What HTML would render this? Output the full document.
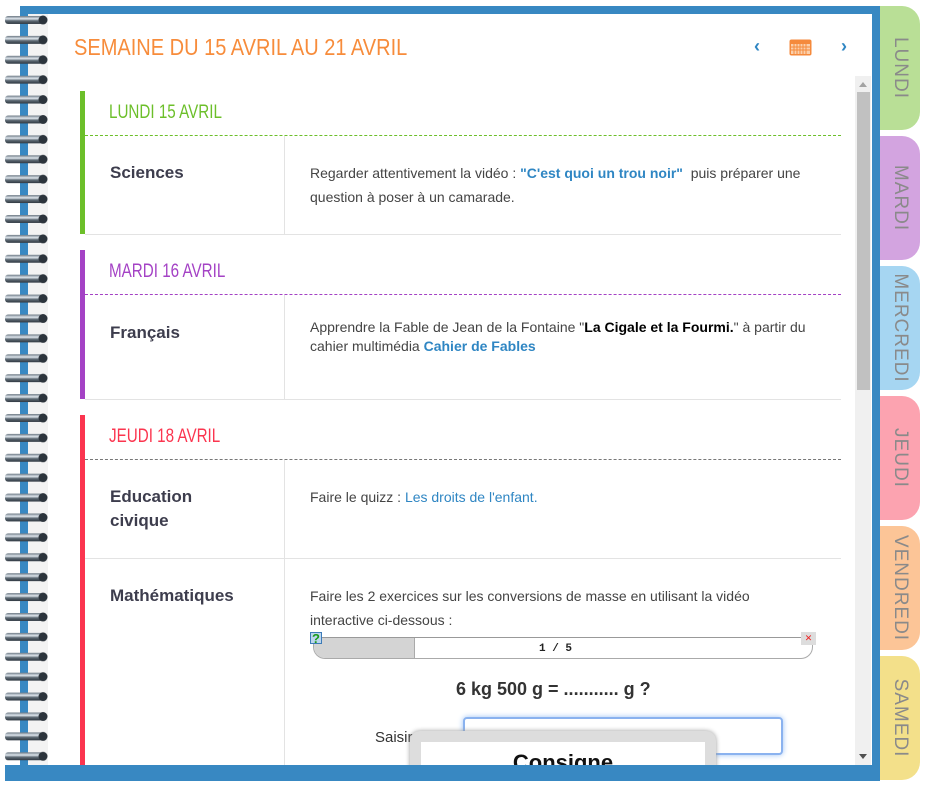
<!DOCTYPE html>
<html><head><meta charset="utf-8"><style>
*{margin:0;padding:0;box-sizing:border-box}
body{width:935px;height:790px;background:#fff;position:relative;overflow:hidden;font-family:"Liberation Sans",Arial,sans-serif}
.abs{position:absolute}
.tab{position:absolute;left:880px;width:40px;height:124px;border-radius:0 18px 18px 0;}
.tab span{position:absolute;left:50%;top:50%;transform:translate(-50%,-50%) rotate(90deg);font-size:19px;color:#8a8a8a;letter-spacing:1px;white-space:nowrap;font-weight:normal}
.hd{position:absolute;font-size:19px;letter-spacing:0;transform:scaleX(.8);transform-origin:left;white-space:nowrap}
.sub{position:absolute;left:110px;font-size:17px;font-weight:bold;color:#3d3d4d;line-height:24px}
.txt{position:absolute;left:310px;font-size:14px;color:#444;line-height:24px}
.lk{color:#2f86c3;font-weight:bold}
</style></head><body>
<div class="tab" style="top:6px;background:#b9df96"><span>LUNDI</span></div>
<div class="tab" style="top:136px;background:#d3a4e0"><span>MARDI</span></div>
<div class="tab" style="top:266px;background:#a6d6f2"><span>MERCREDI</span></div>
<div class="tab" style="top:396px;background:#fca3b0"><span>JEUDI</span></div>
<div class="tab" style="top:526px;background:#fcc597"><span>VENDREDI</span></div>
<div class="tab" style="top:656px;background:#f3e08a"><span>SAMEDI</span></div>
<div class="abs" style="left:20px;top:6px;width:860px;height:775px;background:#3888c2"></div>
<div class="abs" style="left:28px;top:14px;width:844px;height:751px;background:#fff;overflow:hidden">
<div class="abs" style="left:0;top:0;width:20px;height:751px;background:#f3f3f3"></div>
<div class="hd" style="left:46px;top:20px;color:#f78c3b;font-size:23px;transform:scaleX(.87)">SEMAINE DU 15 AVRIL AU 21 AVRIL</div>
<div class="abs" style="left:726px;top:22px;color:#2f86c3;font-size:18px;font-weight:bold">‹</div>
<div class="abs" style="left:813px;top:22px;color:#2f86c3;font-size:18px;font-weight:bold">›</div>
<svg class="abs" style="left:761px;top:25px" width="23" height="17"><rect x="0.5" y="0.5" width="22" height="16" rx="2" fill="#f58a3c"/><rect x="2" y="5" width="19" height="10" fill="#fbd0ac"/><g stroke="#f58a3c" stroke-width="1"><path d="M5 5v10M8 5v10M11 5v10M14 5v10M17 5v10M2 8h19M2 11h19"/></g></svg>
<div class="abs" style="left:827px;top:62px;width:16px;height:689px;background:#f0f0f0"></div>
<div class="abs" style="left:829px;top:78px;width:13px;height:298px;background:#c1c1c1"></div>
<div class="abs" style="left:831px;top:68px;width:0;height:0;border:4px solid transparent;border-bottom:5px solid #a3a3a3;border-top:0"></div>
<div class="abs" style="left:831px;top:740px;width:0;height:0;border:4px solid transparent;border-top:5px solid #505050;border-bottom:0"></div>
<div class="abs" style="left:52px;top:77px;width:5px;height:143px;background:#6cbf2a"></div>
<div class="hd" style="left:81px;top:88px;color:#6cbf2a">LUNDI 15 AVRIL</div>
<div class="abs" style="left:57px;top:121px;width:756px;border-top:1px dashed #6cbf2a"></div>
<div class="abs" style="left:256px;top:122px;width:1px;height:98px;background:#e3e3e3"></div>
<div class="abs" style="left:57px;top:220px;width:756px;height:1px;background:#e3e3e3"></div>
<div class="abs" style="left:52px;top:236px;width:5px;height:149px;background:#a442c5"></div>
<div class="hd" style="left:81px;top:247px;color:#a442c5">MARDI 16 AVRIL</div>
<div class="abs" style="left:57px;top:280px;width:756px;border-top:1px dashed #a442c5"></div>
<div class="abs" style="left:256px;top:281px;width:1px;height:104px;background:#e3e3e3"></div>
<div class="abs" style="left:57px;top:385px;width:756px;height:1px;background:#e3e3e3"></div>
<div class="abs" style="left:52px;top:401px;width:5px;height:360px;background:#fb354f"></div>
<div class="hd" style="left:81px;top:412px;color:#fb354f">JEUDI 18 AVRIL</div>
<div class="abs" style="left:57px;top:445px;width:756px;border-top:1px dashed #777"></div>
<div class="abs" style="left:256px;top:446px;width:1px;height:320px;background:#e3e3e3"></div>
<div class="abs" style="left:57px;top:544px;width:756px;height:1px;background:#e3e3e3"></div>
</div>
<div class="sub" style="top:161px">Sciences</div>
<div class="txt" style="top:161px;width:520px">Regarder attentivement la vidéo : <span class="lk">"C'est quoi un trou noir"</span>&nbsp; puis préparer une question à poser à un camarade.</div>
<div class="sub" style="top:321px">Français</div>
<div class="txt" style="top:318px;width:520px;line-height:19px">Apprendre la Fable de Jean de la Fontaine "<b style="color:#000">La Cigale et la Fourmi.</b>" à partir du cahier multimédia <span class="lk">Cahier de Fables</span></div>
<div class="sub" style="top:485px">Education<br>civique</div>
<div class="txt" style="top:485px">Faire le quizz : <span style="color:#2f86c3">Les droits de l'enfant.</span></div>
<div class="sub" style="top:584px">Mathématiques</div>
<div class="txt" style="top:584px;width:480px">Faire les 2 exercices sur les conversions de masse en utilisant la vidéo interactive ci-dessous :</div>
<div class="abs" style="left:313px;top:637px;width:500px;height:22px;border:1px solid #aaa;border-top:1px solid #999;border-radius:0 0 12px 12px;background:#fff;overflow:hidden"><div style="width:101px;height:100%;background:#d4d4d4;border-right:1px solid #aaa"></div><div class="abs" style="left:225px;top:5px;font-family:'Liberation Mono',monospace;font-size:11px;font-weight:bold;color:#222">1 / 5</div></div>
<div class="abs" style="left:310px;top:632px;width:12px;height:12px;background:#bcd6ee;border:1px solid #3d7bb8;color:#1a9a1a;font-size:13px;font-weight:bold;line-height:12px;text-align:center">?</div>
<div class="abs" style="left:801px;top:632px;width:15px;height:13px;background:#ddd;color:#e22;font-size:9px;text-align:center;line-height:13px">✕</div>
<div class="abs" style="left:456px;top:679px;font-size:18px;font-weight:bold;color:#333">6 kg 500 g = ........... g ?</div>
<div class="abs" style="left:375px;top:729px;font-size:15px;color:#333">Saisir</div>
<div class="abs" style="left:463px;top:717px;width:320px;height:38px;border:2px solid #8ab2ef;border-radius:4px;background:#fff;box-shadow:0 0 6px #9ac0f5"></div>
<div class="abs" style="left:410px;top:731px;width:306px;height:40px;background:#ddd;border-radius:10px 10px 0 0;box-shadow:0 0 5px #999"></div>
<div class="abs" style="left:421px;top:742px;width:284px;height:30px;background:#fff;text-align:center;font-size:22px;font-weight:bold;color:#111;padding-top:8px">Consigne</div>
<div class="abs" style="left:5px;top:765px;width:867px;height:16px;background:#3888c2"></div>
<svg class="abs" style="left:0;top:0" width="52" height="765">
<defs><linearGradient id="g" x1="0" y1="0" x2="0" y2="1"><stop offset="0" stop-color="#6b7782"/><stop offset=".35" stop-color="#dfe7ee"/><stop offset=".6" stop-color="#5f6b75"/><stop offset="1" stop-color="#2e3740"/></linearGradient>
<pattern id="p" x="0" y="14" width="52" height="19.9" patternUnits="userSpaceOnUse"><rect x="5" y="2" width="40" height="8" rx="3" fill="url(#g)"/><circle cx="43" cy="6" r="4.5" fill="#2c343c"/></pattern></defs>
<rect x="0" y="14" width="52" height="750" fill="url(#p)"/>
</svg>
</body></html>
